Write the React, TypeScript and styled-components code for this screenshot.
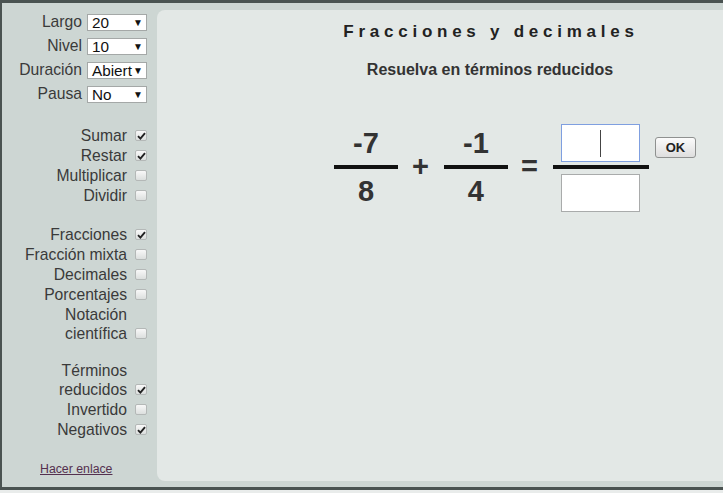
import React from "react";
import styled, { createGlobalStyle } from "styled-components";

const Global = createGlobalStyle`
  html, body { margin: 0; padding: 0; background: #e9eceb; }
  body { font-family: "Liberation Sans", Arial, sans-serif; color: #333; }
`;

const Frame = styled.div`
  display: flex;
  width: 721px;
  height: 484px;
  border-top: 3px solid #4a5351;
  border-left: 2px solid #4a5351;
  border-bottom: 3px solid #4a5351;
  background: #cdd6d3;
`;

const Sidebar = styled.div`
  width: 155px;
  flex: none;
  display: flex;
  flex-direction: column;
  padding: 7px 10px 0 0;
  box-sizing: border-box;
  font-size: 15.7px;
  color: #3a3a3a;
`;

const SelectRow = styled.div`
  display: flex;
  justify-content: flex-end;
  align-items: center;
  height: 24px;
  gap: 5px;
`;

const SelectBox = styled.div`
  width: 60px;
  height: 17px;
  box-sizing: border-box;
  background: #fff;
  border: 1px solid #a4a8a7;
  display: flex;
  align-items: center;
  justify-content: space-between;
  padding: 0 3px 0 4px;
  font-size: 15.3px;
  color: #111;
  line-height: 15px;
`;

const Arrow = styled.span`
  font-size: 10px;
  color: #111;
`;

const CheckRow = styled.div`
  display: flex;
  justify-content: flex-end;
  align-items: flex-end;
  gap: 8px;
  min-height: 20px;
  line-height: 19px;
  text-align: right;
`;

const Label = styled.span`
  padding-bottom: 1px;
`;

const Box = styled.span`
  width: 12px;
  height: 11px;
  box-sizing: border-box;
  border: 1px solid #b4b8b7;
  border-radius: 2px;
  background: linear-gradient(#f8f8f8, #dcdfde);
  margin-bottom: 5px;
  flex: none;
  display: flex;
  align-items: center;
  justify-content: center;
`;

const Spacer = styled.div<{ $h: number }>`
  height: ${(p) => p.$h}px;
  flex: none;
`;

const LinkWrap = styled.div`
  padding-left: 38px;
  margin-top: 22px;
  font-size: 12.3px;
`;

const Link = styled.a`
  color: #54304f;
  text-decoration: underline;
`;

const Panel = styled.div`
  flex: 1;
  margin: 7px 0 6px 0;
  background: #e3e8e6;
  border-radius: 8px 0 0 8px;
  padding-left: 100px;
  display: flex;
  flex-direction: column;
  align-items: center;
`;

const Title = styled.div`
  margin-top: 12px;
  font-size: 17px;
  font-weight: bold;
  letter-spacing: 4.75px;
  color: #222;
  line-height: 20px;
  padding-left: 2px;
`;

const Subtitle = styled.div`
  margin-top: 18px;
  font-size: 16px;
  font-weight: bold;
  color: #333;
  line-height: 19px;
`;

const Equation = styled.div`
  align-self: flex-start;
  margin-left: 77px;
  margin-top: 45px;
  display: flex;
  align-items: flex-start;
  font-weight: bold;
  color: #333;
`;

const Fraction = styled.div`
  display: flex;
  flex-direction: column;
  align-items: center;
  width: 64px;
`;

const Num = styled.div<{ $mt?: number }>`
  font-size: 29px;
  line-height: 32px;
  height: 32px;
  margin-top: ${(p) => p.$mt ?? 0}px;
`;

const Bar = styled.div<{ $w: number; $top: number; $bottom: number }>`
  width: ${(p) => p.$w}px;
  height: 4px;
  background: #111;
  margin: ${(p) => p.$top}px 0 ${(p) => p.$bottom}px;
`;

const Op = styled.div<{ $ml: number; $mr: number }>`
  font-size: 29px;
  margin: 26px ${(p) => p.$mr}px 0 ${(p) => p.$ml}px;
  line-height: 32px;
`;

const Answer = styled.div`
  display: flex;
  flex-direction: column;
  align-items: center;
  width: 96px;
`;

const Input = styled.div<{ $focus?: boolean }>`
  width: 79px;
  height: 38px;
  box-sizing: border-box;
  background: #fff;
  border: 1px solid ${(p) => (p.$focus ? "#7f9fe0" : "#a9abab")};
  display: flex;
  align-items: center;
  justify-content: center;
`;

const Caret = styled.span`
  width: 1px;
  height: 27px;
  background: #444;
`;

const OkButton = styled.button`
  margin: 13px 0 0 6px;
  width: 41px;
  height: 21px;
  padding: 0;
  font-family: "Liberation Sans", Arial, sans-serif;
  font-size: 13px;
  font-weight: bold;
  color: #222;
  background: linear-gradient(#fbfbfb, #dedede);
  border: 1px solid #8f9190;
  border-radius: 3px;
`;

const Check = () => (
  <svg width="9" height="8" viewBox="0 0 9 8">
    <path d="M1 4.2 L3.4 6.6 L8 1.2" stroke="#222" strokeWidth="1.9" fill="none" />
  </svg>
);

const CB = ({ on }: { on?: boolean }) => <Box>{on ? <Check /> : null}</Box>;

const selects: [string, string][] = [
  ["Largo", "20"],
  ["Nivel", "10"],
  ["Duración", "Abiert"],
  ["Pausa", "No"],
];

export default function App() {
  return (
    <>
      <Global />
      <Frame>
        <Sidebar>
          {selects.map(([l, v]) => (
            <SelectRow key={l}>
              <span>{l}</span>
              <SelectBox>
                <span>{v}</span>
                <Arrow>▼</Arrow>
              </SelectBox>
            </SelectRow>
          ))}
          <Spacer $h={20} />
          <CheckRow><Label>Sumar</Label><CB on /></CheckRow>
          <CheckRow><Label>Restar</Label><CB on /></CheckRow>
          <CheckRow><Label>Multiplicar</Label><CB /></CheckRow>
          <CheckRow><Label>Dividir</Label><CB /></CheckRow>
          <Spacer $h={19} />
          <CheckRow><Label>Fracciones</Label><CB on /></CheckRow>
          <CheckRow><Label>Fracción mixta</Label><CB /></CheckRow>
          <CheckRow><Label>Decimales</Label><CB /></CheckRow>
          <CheckRow><Label>Porcentajes</Label><CB /></CheckRow>
          <CheckRow><Label>Notación<br />científica</Label><CB /></CheckRow>
          <Spacer $h={17} />
          <CheckRow><Label>Términos<br />reducidos</Label><CB on /></CheckRow>
          <CheckRow><Label>Invertido</Label><CB /></CheckRow>
          <CheckRow><Label>Negativos</Label><CB on /></CheckRow>
          <LinkWrap><Link href="#">Hacer enlace</Link></LinkWrap>
        </Sidebar>
        <Panel>
          <Title>Fracciones y decimales</Title>
          <Subtitle>Resuelva en términos reducidos</Subtitle>
          <Equation>
            <Fraction>
              <Num $mt={3}>-7</Num>
              <Bar $w={64} $top={6} $bottom={6} />
              <Num>8</Num>
            </Fraction>
            <Op $ml={14} $mr={15}>+</Op>
            <Fraction>
              <Num $mt={3}>-1</Num>
              <Bar $w={64} $top={6} $bottom={6} />
              <Num>4</Num>
            </Fraction>
            <Op $ml={13} $mr={15}>=</Op>
            <Answer>
              <Input $focus><Caret /></Input>
              <Bar $w={96} $top={3} $bottom={5} />
              <Input />
            </Answer>
            <OkButton>OK</OkButton>
          </Equation>
        </Panel>
      </Frame>
    </>
  );
}
